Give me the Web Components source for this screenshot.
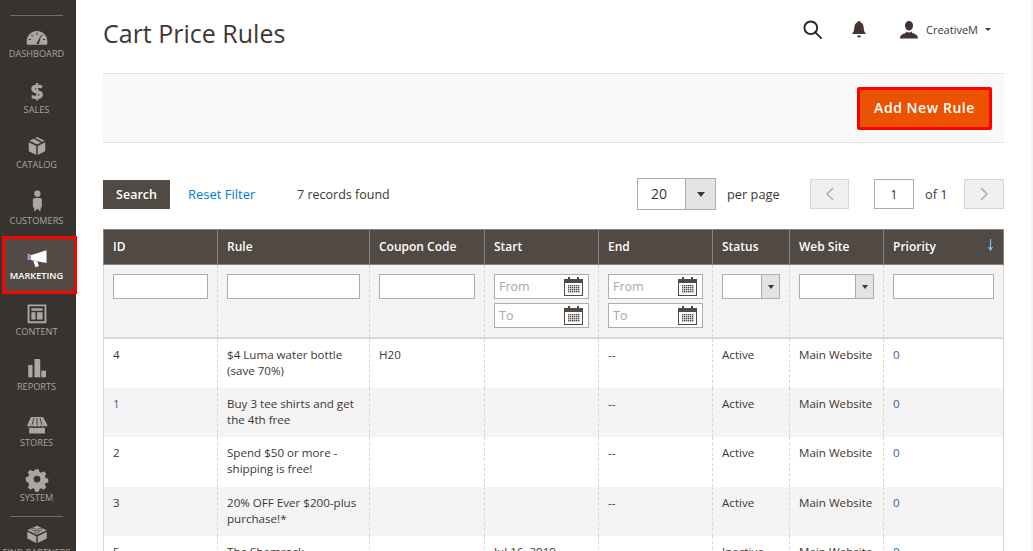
<!DOCTYPE html>
<html>
<head>
<meta charset="utf-8">
<title>Cart Price Rules</title>
<style>
html, body { margin: 0; height: 551px; overflow: hidden; background: #fff; }
body { font-family: "Open Sans", sans-serif; color: #41362f; display: flex; }
</style>
</head>
<body>
<admin-sidebar>
  <nav-item label="DASHBOARD" icon="dashboard"></nav-item>
  <nav-item label="SALES" icon="sales"></nav-item>
  <nav-item label="CATALOG" icon="catalog"></nav-item>
  <nav-item label="CUSTOMERS" icon="customers"></nav-item>
  <nav-item label="MARKETING" icon="marketing" active></nav-item>
  <nav-item label="CONTENT" icon="content"></nav-item>
  <nav-item label="REPORTS" icon="reports"></nav-item>
  <nav-item label="STORES" icon="stores"></nav-item>
  <nav-item label="SYSTEM" icon="system"></nav-item>
  <nav-item label="FIND PARTNERS" icon="partners" divided></nav-item>
</admin-sidebar>
<page-main>
  <page-header title="Cart Price Rules" user="CreativeM"></page-header>
  <action-bar label="Add New Rule"></action-bar>
  <grid-toolbar records="7" perpage="20" page="1" pages="1"></grid-toolbar>
  <rules-grid></rules-grid>
</page-main>

<script>
// iconos do menu lateral, todos em viewBox 0 0 32 32
const ICONS = {
  dashboard: '<path d="M2.500 29C.5 17 8 10.700 16 10.700S31.500 17 29.500 29z"/><path d="M16 13v3M8.500 15.500l2 2.500M23.500 15.500l-2 2.500M5 22h3M27 22h-3" stroke="#373330" stroke-width="1.300" fill="none"/><path d="M15 28l7-13-3.500 13z" fill="#373330"/>',
  sales: '<text x="16" y="26" text-anchor="middle" font-family="Open Sans" font-weight="800" font-size="29">$</text>',
  catalog: '<path d="M16 4 6 9l10 5 10-5z"/><path d="M5 11v12l10 5V16z"/><path d="M27 11v12l-10 5V16z"/><path d="M11 6l10 5.300 2-1L13 5z" fill="#373330"/>',
  customers: '<circle cx="16.500" cy="5" r="4.200"/><path d="M10.500 13c0-1.500 1.300-2.500 2.700-2.500h6.600c1.400 0 2.700 1 2.700 2.500v9.500L21 23.500l-.5 5.500-3-3.500h-2l-3 3.500-.5-5.500-1.500-1z"/>',
  marketing: '<path fill="#fff" d="M28.700 7v17L7.500 20v-6.500z"/><path fill="#fff" d="M11 21l5.500 1 2 6-4.500 1.500z"/><rect x="3.300" y="12" width="4" height="8" fill="#a98dd8"/>',
  content: '<path transform="translate(0 1)" fill-rule="evenodd" d="M3.500 3.500h25v25h-25zM6 6v20h20V6zM8.500 8.500h15v3.500h-15zM8.500 14h5.500v9.500H8.500zM16 14h7.500v9.500H16z"/>',
  reports: '<rect x="4.300" y="12" width="5.700" height="16.400"/><rect x="12.600" y="4" width="7.700" height="24.400"/><rect x="21.600" y="19.600" width="6.400" height="8.800"/>',
  stores: '<g transform="translate(0 1.500)"><path d="M8 5h16l6 11c0 2.500-4 2.500-4.500 0 0 2.500-4 2.500-4.500 0 0 2.500-4 2.500-4.500 0-.5 2.500-4.500 2.500-4.500 0 0 2.500-4 2.500-4.500 0-.5 2.500-4.500 2.500-4.500 0z"/><path d="M5.500 19c1 .8 2.500.8 3.500 0 1.500 1 3.500 1 5 0 1.500 1 2.500 1 4 0 1.500 1 3.500 1 5 0 1 .8 2.500.8 3.500 0v8h-21z"/><path d="M12 6.500l-2.500 9M16 6.500v9M20 6.500l2.500 9" stroke="#373330" stroke-width="1.200" fill="none"/></g>',
  system: '<path fill-rule="evenodd" d="M13.500 3h5l.8 3.600 2.400 1 3.200-2 3.500 3.500-2 3.200 1 2.400 3.600.8v5l-3.600.8-1 2.400 2 3.200-3.500 3.500-3.200-2-2.400 1-.8 3.600h-5l-.8-3.600-2.400-1-3.200 2-3.500-3.500 2-3.200-1-2.400L1 18.500v-5l3.600-.8 1-2.400-2-3.200 3.500-3.500 3.200 2 2.400-1zM16 11.500a4.500 4.500 0 1 0 0 9 4.500 4.500 0 0 0 0-9z"/>',
  partners: '<path d="M16 5 3 11l13 6 13-6z"/><path d="M3 13v9l12 6V19z"/><path d="M29 13v9l-12 6V19z"/><ellipse cx="12" cy="10" rx="3" ry="1.500" fill="none" stroke="#373330" stroke-width=".8"/><ellipse cx="20" cy="10" rx="3" ry="1.500" fill="none" stroke="#373330" stroke-width=".8"/><ellipse cx="16" cy="13" rx="3" ry="1.500" fill="none" stroke="#373330" stroke-width=".8"/>'
};

class AdminSidebar extends HTMLElement {
  constructor() {
    super();
    this.attachShadow({ mode: 'open' });
    this.shadowRoot.innerHTML = `
      <style>
        :host { display: flex; flex-direction: column; align-items: stretch; width: 76px; height: 551px; flex: none; background: #373330; }
        .rule { height: 1px; background: #736d69; margin: 15px 13px 0 10px; flex: none; }
      </style>
      <div class="rule"></div>
      <slot></slot>
    `;
  }
}

class NavItem extends HTMLElement {
  constructor() {
    super();
    this.attachShadow({ mode: 'open' });
  }
  connectedCallback() {
    const icon = this.getAttribute('icon');
    this.shadowRoot.innerHTML = `
      <style>
        :host { display: block; flex: none; height: 55.500px; box-sizing: border-box; padding: 7px 3px 0 0; text-align: center; position: relative; color: #a9a39e; }
        :host([active]) { color: #fff; background: #524a45; box-shadow: inset 0 0 0 3px #f00; margin: -2px -1px 0 2px; height: 57.500px; padding: 9px 6px 0 0; }
        :host([divided]) { padding-top: 6px; }
        :host([divided]) .rule { display: block; }
        .rule { display: none; position: absolute; top: 0; left: 10px; right: 13px; height: 1px; background: #736d69; }
        svg { display: block; width: 24px; height: 24px; margin: 0 auto; fill: #aaa6a0; overflow: visible; }
        :host([active]) svg { fill: #fff; }
        .label { display: block; font-size: 9.200px; line-height: 12px; margin-top: 1px; white-space: nowrap; }
        :host([active]) .label { font-weight: 600; color: #fff; }
      </style>
      <span class="rule"></span>
      <svg viewBox="0 0 32 32">${ICONS[icon]}</svg>
      <span class="label">${this.getAttribute('label')}</span>
    `;
  }
}

class PageMain extends HTMLElement {
  constructor() {
    super();
    this.attachShadow({ mode: 'open' });
    this.shadowRoot.innerHTML = `
      <style>
        :host { display: block; flex: 1; min-width: 0; height: 551px; box-sizing: border-box; padding: 0 27px 0 27px; border-right: 2px solid #f5f5f5; overflow: hidden; }
      </style>
      <slot></slot>
    `;
  }
}

class PageHeader extends HTMLElement {
  constructor() {
    super();
    this.attachShadow({ mode: 'open' });
  }
  connectedCallback() {
    this.shadowRoot.innerHTML = `
      <style>
        :host { display: flex; align-items: center; height: 73px; box-sizing: border-box; padding-bottom: 7px; }
        h1 { flex: 1; margin: 0; font-size: 25px; font-weight: 400; color: #41362f; line-height: 34px; }
        .tools { display: flex; align-items: center; margin-top: -7px; }
        .search { width: 19px; height: 19px; margin-right: 30px; }
        .bell { width: 14px; height: 17px; margin-right: 34px; }
        .user { width: 18px; height: 18px; margin-right: 8px; }
        .name { font-size: 11px; color: #41362f; margin-right: 7px; white-space: nowrap; }
        .caret { width: 0; height: 0; border: 3px solid transparent; border-top: 3.500px solid #41362f; border-bottom: 0; margin-right: 13px; }
      </style>
      <h1>${this.getAttribute('title')}</h1>
      <div class="tools">
        <svg class="search" viewBox="0 0 20 20" fill="none" stroke="#2b2622" stroke-width="2"><circle cx="8.200" cy="8.200" r="6.700"/><path d="M13 13l6 6" stroke-linecap="round"/></svg>
        <svg class="bell" viewBox="0 0 14 17" fill="#41362f"><path d="M7 0c1 0 1.300.6 1.300 1.300C11 2 11.500 4.500 11.700 7c.2 3 1 4.500 2.300 6H0c1.300-1.500 2.100-3 2.300-6C2.500 4.500 3 2 5.700 1.300 5.700.6 6 0 7 0z"/><path d="M5 14.500h4c0 1.200-1 2-2 2s-2-.8-2-2z"/></svg>
        <svg class="user" viewBox="0 0 18 18" fill="#41362f"><path d="M5 4.500C5 2 6.800 0 9 0s4 2 4 4.500S11.500 9.500 9 9.500 5 7 5 4.500z"/><path d="M0 17.500c0-3.500 3-4.500 5-5.200.8-.3 1.200-1 1.200-1.800.8.6 1.800 1 2.800 1s2-.4 2.800-1c0 .8.4 1.500 1.200 1.800 2 .7 5 1.700 5 5.200z"/></svg>
        <span class="name">${this.getAttribute('user')}</span>
        <span class="caret"></span>
      </div>
    `;
  }
}

class ActionBar extends HTMLElement {
  constructor() {
    super();
    this.attachShadow({ mode: 'open' });
  }
  connectedCallback() {
    this.shadowRoot.innerHTML = `
      <style>
        :host { display: flex; justify-content: flex-end; align-items: center; height: 70px; box-sizing: border-box; background: #f8f8f8; border-top: 1px solid #e3e3e3; border-bottom: 1px solid #e3e3e3; padding-right: 12px; }
        button { width: 135px; height: 43px; background: #eb5202; border: 3px solid #f00; border-radius: 2px; color: #fff; font: 600 14px "Open Sans", sans-serif; letter-spacing: .55px; padding: 0 0 2px; }
      </style>
      <button>${this.getAttribute('label')}</button>
    `;
  }
}

class GridToolbar extends HTMLElement {
  constructor() {
    super();
    this.attachShadow({ mode: 'open' });
  }
  connectedCallback() {
    const a = n => this.getAttribute(n);
    this.shadowRoot.innerHTML = `
      <style>
        :host { display: flex; align-items: center; height: 30px; margin-top: 36px; font-size: 12.800px; color: #41362f; }
        .search { width: 67px; height: 29px; background: #514943; color: #fff; font: 600 12.500px "Open Sans", sans-serif; border: 0; padding: 0; }
        .reset { color: #007bdb; margin-left: 18px; width: 109px; white-space: nowrap; font-size: 13px; }
        .found { flex: 1; font-size: 12.500px; }
        .select { display: flex; width: 79px; height: 32px; box-sizing: border-box; border: 1px solid #adadad; background: #fff; }
        .select .val { flex: 1; padding-left: 13px; line-height: 30px; font-size: 14px; }
        .select .arrow { width: 29px; background: #e3e3e3; border-left: 1px solid #adadad; display: flex; align-items: center; justify-content: center; }
        .arrow i { border: 4px solid transparent; border-top: 5px solid #41362f; border-bottom: 0; }
        .perpage { margin-left: 11px; width: 83px; }
        .pg { width: 39px; height: 30px; box-sizing: border-box; background: #f0f0f0; border: 1px solid #d6d6d6; display: flex; align-items: center; justify-content: center; }
        .num { width: 40px; height: 30px; box-sizing: border-box; border: 1px solid #adadad; background: #fff; text-align: center; line-height: 28px; margin-left: 25px; }
        .of { margin-left: 11px; width: 39px; white-space: nowrap; }
        .pg svg { width: 9px; height: 14px; fill: none; stroke: #adadad; stroke-width: 1.500; }
      </style>
      <button class="search">Search</button>
      <span class="reset">Reset Filter</span>
      <span class="found">${a('records')} records found</span>
      <div class="select"><span class="val">${a('perpage')}</span><span class="arrow"><i></i></span></div>
      <span class="perpage">per page</span>
      <span class="pg"><svg viewBox="0 0 9 14"><path d="M8 1 2 7l6 6"/></svg></span>
      <span class="num">${a('page')}</span>
      <span class="of">of ${a('pages')}</span>
      <span class="pg" style="width:40px"><svg viewBox="0 0 9 14"><path d="M1 1l6 6-6 6"/></svg></span>
    `;
  }
}

class DateField extends HTMLElement {
  constructor() {
    super();
    this.attachShadow({ mode: 'open' });
  }
  connectedCallback() {
    let dots = '';
    for (let y = 8; y < 16; y += 2) {
      for (let x = 4; x < 15; x += 2) dots += `<rect x="${x}" y="${y}" width="1.400" height="1.400"/>`;
    }
    this.shadowRoot.innerHTML = `
      <style>
        :host { display: flex; align-items: center; height: 25px; box-sizing: border-box; border: 1px solid #adadad; background: #fff; padding: 0 5px 0 4px; font-size: 12.500px; color: #a8a8a8; justify-content: space-between; }
        svg { width: 19px; height: 19px; }
      </style>
      <span>${this.getAttribute('placeholder')}</span>
      <svg viewBox="0 0 19 19"><rect x=".5" y="2.500" width="18" height="16" fill="#fff" stroke="#514943"/><rect x="0" y="2" width="19" height="4" fill="#514943"/><rect x="4" y="0" width="2" height="5" fill="#514943"/><rect x="13" y="0" width="2" height="5" fill="#514943"/><g fill="#514943">${dots}</g></svg>
    `;
  }
}

class RulesGrid extends HTMLElement {
  constructor() {
    super();
    this.attachShadow({ mode: 'open' });

    this.colunas = [
      { nome: 'ID', largura: 114 },
      { nome: 'Rule', largura: 152 },
      { nome: 'Coupon Code', largura: 115 },
      { nome: 'Start', largura: 114 },
      { nome: 'End', largura: 114 },
      { nome: 'Status', largura: 77 },
      { nome: 'Web Site', largura: 94 },
      { nome: 'Priority', largura: 120 }
    ];

    this.regras = [
      { id: '4', rule: '$4 Luma water bottle (save 70%)', coupon: 'H20', start: '', end: '--', status: 'Active' },
      { id: '1', rule: 'Buy 3 tee shirts and get the 4th free', coupon: '', start: '', end: '--', status: 'Active' },
      { id: '2', rule: 'Spend $50 or more - shipping is free!', coupon: '', start: '', end: '--', status: 'Active' },
      { id: '3', rule: '20% OFF Ever $200-plus purchase!*', coupon: '', start: '', end: '--', status: 'Active' },
      { id: '5', rule: 'The Shamrock', coupon: '', start: 'Jul 16, 2019', end: '', status: 'Inactive' }
    ];
  }

  connectedCallback() {
    const input = '<span class="input"></span>';
    const datas = '<date-field placeholder="From"></date-field><date-field placeholder="To"></date-field>';
    const select = '<span class="dd"><span></span><span class="arrow"><i></i></span></span>';
    const seta = '<svg class="sort" viewBox="0 0 5 12" fill="none" stroke="#7cc4f5" stroke-width="1.200"><path d="M2.500 0v10M.5 8l2 3 2-3"/></svg>';
    this.shadowRoot.innerHTML = `
      <style>
        :host { display: block; margin-top: 20px; font-size: 11.600px; color: #41362f; }
        table { border-collapse: collapse; table-layout: fixed; width: 900px; }
        th { background: #514943; color: #fff; font-weight: 600; font-size: 12px; text-align: left; height: 35px; box-sizing: border-box; padding: 0 9px 2px; border: 1px solid #8a837f; position: relative; }
        .sort { position: absolute; right: 10px; top: 9px; width: 5px; height: 12px; }
        .filtros td { background: #f4f4f4; height: 73px; box-sizing: border-box; vertical-align: top; padding: 9px 9px 0; border-bottom: 2px solid #d6d6d6; }
        td { border-left: 1px dashed #d6d6d6; border-right: 1px dashed #d6d6d6; }
        tr td:first-child { border-left: 1px solid #d6d6d6; }
        tr td:last-child { border-right: 1px solid #d6d6d6; }
        .input { display: block; height: 25px; box-sizing: border-box; border: 1px solid #adadad; background: #fff; }
        date-field + date-field { margin-top: 4px; }
        .dd { display: flex; height: 25px; box-sizing: border-box; border: 1px solid #adadad; background: #fff; }
        .dd span:first-child { flex: 1; }
        .dd .arrow { width: 17px; background: #e3e3e3; border-left: 1px solid #adadad; display: flex; align-items: center; justify-content: center; }
        .arrow i { border: 3.500px solid transparent; border-top: 4.500px solid #41362f; border-bottom: 0; margin-top: 1px; }
        tbody.linhas td { height: 50px; box-sizing: border-box; padding: 8px 9px 0; vertical-align: top; line-height: 16px; }
        tbody.linhas tr:nth-child(even) td { background: #f4f4f4; height: 49px; }
        .site { white-space: nowrap; }
        .azul { color: #31639c; }
      </style>
      <table>
        <colgroup>${this.colunas.map(c => `<col style="width:${c.largura}px">`).join('')}</colgroup>
        <thead>
          <tr>${this.colunas.map((c, i) => `<th>${c.nome}${i === 7 ? seta : ''}</th>`).join('')}</tr>
        </thead>
        <tbody>
          <tr class="filtros">
            <td>${input}</td><td>${input}</td><td>${input}</td>
            <td>${datas}</td><td>${datas}</td>
            <td>${select}</td><td>${select}</td><td>${input}</td>
          </tr>
        </tbody>
        <tbody class="linhas">
          ${this.regras.map(r => `
            <tr>
              <td${r.id === '1' ? ' class="azul"' : ''}>${r.id}</td>
              <td>${r.rule}</td>
              <td>${r.coupon}</td>
              <td>${r.start}</td>
              <td>${r.end}</td>
              <td>${r.status}</td>
              <td class="site">Main Website</td>
              <td class="azul">0</td>
            </tr>
          `).join('')}
        </tbody>
      </table>
    `;
  }
}

customElements.define('admin-sidebar', AdminSidebar);
customElements.define('nav-item', NavItem);
customElements.define('page-main', PageMain);
customElements.define('page-header', PageHeader);
customElements.define('action-bar', ActionBar);
customElements.define('grid-toolbar', GridToolbar);
customElements.define('date-field', DateField);
customElements.define('rules-grid', RulesGrid);
</script>
</body>
</html>
